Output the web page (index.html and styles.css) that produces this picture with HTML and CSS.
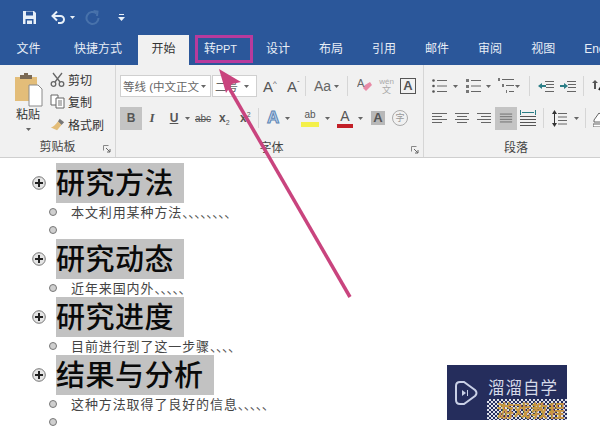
FILE: index.html
```html
<!DOCTYPE html>
<html lang="zh-CN">
<head>
    <meta charset="UTF-8">
    <meta name="viewport" content="width=device-width, initial-scale=1.0">
    <title>大纲视图</title>
    <link rel="stylesheet" href="styles.css">
</head>
<body>
    <svg class="defs" width="0" height="0">
        <symbol id="caret" viewBox="0 0 7 4"><path d="M0 0h7L3.500 4z" fill="#666"/></symbol>
        <symbol id="plus" viewBox="0 0 14 14"><circle cx="7" cy="7" r="6.300" fill="#e4e4e4" stroke="#777" stroke-width="1"/><path d="M3 7h8M7 3v8" stroke="#222" stroke-width="2"/></symbol>
        <symbol id="lines" viewBox="0 0 16 12"><path d="M1 1.500h14M1 4.500h14M1 7.500h14M1 10.500h14" stroke="#666" stroke-width="1" fill="none"/></symbol>
    </svg>

    <!-- 标题栏 -->
    <header class="titlebar">
        <svg class="qa-save" width="15" height="15" viewBox="0 0 15 15"><path d="M1 1h11l2 2v11H1z" fill="#e8f0f8"/><path d="M4 1.500h7v4H4z" fill="#2b579a"/><path d="M3.500 9h8v5h-8z" fill="#2b579a"/><path d="M5 10.500h5v3.500H5z" fill="#e8f0f8"/></svg>
        <svg class="qa-undo" width="15" height="13" viewBox="0 0 15 13"><path d="M2 5h7.500a3.500 3.500 0 0 1 0 7H7" fill="none" stroke="#e8f0f8" stroke-width="2"/><path d="M6 .5L1.500 5 6 9.500" fill="none" stroke="#e8f0f8" stroke-width="2"/></svg>
        <svg class="qa-caret" width="5" height="3" viewBox="0 0 7 4"><path d="M0 0h7L3.500 4z" fill="#e8f0f8"/></svg>
        <svg class="qa-redo" width="15" height="15" viewBox="0 0 15 15"><path d="M11.500 3.500A6 6 0 1 0 13.500 8" fill="none" stroke="#4872ab" stroke-width="2"/><path d="M8.500 1l4 .5-.5 4.500" fill="none" stroke="#4872ab" stroke-width="2"/></svg>
        <svg class="qa-more" width="7" height="7" viewBox="0 0 7 7"><path d="M1 .5h5" stroke="#e8f0f8"/><path d="M0 3h7L3.500 7z" fill="#e8f0f8"/></svg>
    </header>

    <!-- 选项卡 -->
    <nav class="tabs">
        <span class="tab tab-first">文件</span>
        <span class="tab">快捷方式</span>
        <span class="tab tab-active">开始</span>
        <span class="tab tab-marked"><em>转</em>PPT</span>
        <span class="tab">设计</span>
        <span class="tab">布局</span>
        <span class="tab">引用</span>
        <span class="tab">邮件</span>
        <span class="tab">审阅</span>
        <span class="tab">视图</span>
        <span class="tab">Ene</span>
    </nav>

    <!-- 功能区 -->
    <section class="ribbon">
        <div class="group group-clip">
            <div class="group-body clip-body">
                <div class="paste">
                    <svg width="29" height="34" viewBox="0 0 29 34"><path d="M1 4h22v24H1z" fill="#e3bd79"/><path d="M6 2h12v4H6z" fill="#7b6a55"/><path d="M10 0h4v3h-4z" fill="#7b6a55"/><path d="M15 12h9l4 4v17H15z" fill="#fff" stroke="#8a8a8a"/></svg>
                    <span class="paste-label">粘贴</span>
                    <svg width="5" height="3"><use href="#caret"/></svg>
                </div>
                <div class="clip-list">
                    <div class="clip-item">
                        <svg width="15" height="15" viewBox="0 0 15 15"><path d="M3 1l7 9M12 1L5 10" stroke="#666" stroke-width="1.300"/><circle cx="3.500" cy="12" r="2.300" fill="none" stroke="#666" stroke-width="1.300"/><circle cx="11.500" cy="12" r="2.300" fill="none" stroke="#666" stroke-width="1.300"/></svg>
                        <span>剪切</span>
                    </div>
                    <div class="clip-item">
                        <svg width="15" height="15" viewBox="0 0 15 15"><path d="M1 1h7v10H1z" fill="#fff" stroke="#666"/><path d="M6 4h8v10H6z" fill="#fff" stroke="#666"/><path d="M8 7h4M8 9h4M8 11h4" stroke="#777"/></svg>
                        <span>复制</span>
                    </div>
                    <div class="clip-item">
                        <svg width="17" height="15" viewBox="0 0 17 15"><path d="M11 1l5 4-3 3-4-4z" fill="#777"/><path d="M9 4l4 4-5 6-7-3c3-1 5-3 8-7z" fill="#e3bd79"/></svg>
                        <span>格式刷</span>
                    </div>
                </div>
            </div>
            <div class="group-label">剪贴板<svg class="launcher" width="8" height="8" viewBox="0 0 8 8"><path d="M.5.5h5M.5.500v5" stroke="#888" fill="none"/><path d="M3 3l4 4M7 4v3H4" stroke="#666" fill="none"/></svg></div>
        </div>

        <div class="group group-font">
            <div class="group-body">
                <div class="row font-row1">
                    <div class="select select-font"><span>等线 (中文正文</span><svg width="5" height="3"><use href="#caret"/></svg></div>
                    <div class="select select-size"><span>二号</span><svg width="5" height="3"><use href="#caret"/></svg></div>
                    <span class="grow-a">A<sup>^</sup></span>
                    <span class="grow-a shrink-a">A<sup>ˇ</sup></span>
                    <i class="sep sep-grow"></i>
                    <span class="case">Aa</span><svg width="5" height="3"><use href="#caret"/></svg>
                    <i class="sep sep-case"></i>
                    <svg class="ic-clear" width="15" height="16" viewBox="0 0 15 16"><path d="M8 7l5-3 2 3-6 6-3-3z" fill="#e88aa6"/><text x="0" y="9" class="ic-text">A</text></svg>
                    <span class="wen"><small>wén</small>文</span>
                    <span class="boxed-a">A</span>
                </div>
                <div class="row font-row2">
                    <span class="fmt fmt-bold">B</span>
                    <span class="fmt fmt-italic">I</span>
                    <span class="fmt fmt-under">U</span>
                    <svg class="caret-u" width="5" height="3"><use href="#caret"/></svg>
                    <span class="fmt-strike">abc</span>
                    <span class="fmt-script">x<sub>2</sub></span>
                    <span class="fmt-script">x<sup>2</sup></span>
                    <i class="sep sep-fx"></i>
                    <span class="fx-a">A</span><svg class="caret-fx" width="5" height="3"><use href="#caret"/></svg>
                    <span class="hl">ab</span><svg class="caret-hl" width="5" height="3"><use href="#caret"/></svg>
                    <span class="color-a">A</span><svg class="caret-color" width="5" height="3"><use href="#caret"/></svg>
                    <span class="shade-a">A</span>
                    <span class="circle-zi">字</span>
                </div>
            </div>
            <div class="group-label">字体<svg class="launcher" width="8" height="8" viewBox="0 0 8 8"><path d="M.5.5h5M.5.500v5" stroke="#888" fill="none"/><path d="M3 3l4 4M7 4v3H4" stroke="#666" fill="none"/></svg></div>
        </div>

        <div class="group group-para">
            <div class="group-body">
                <div class="row para-row1">
                    <svg width="16" height="16" viewBox="0 0 16 16"><path d="M5 2.500h10M5 8h10M5 13.500h10" stroke="#666"/><circle cx="1.500" cy="2.500" r="1.300" fill="#555"/><circle cx="1.500" cy="8" r="1.300" fill="#555"/><circle cx="1.500" cy="13.500" r="1.300" fill="#555"/></svg>
                    <svg class="caret-p" width="5" height="3"><use href="#caret"/></svg>
                    <svg width="16" height="16" viewBox="0 0 16 16"><path d="M6 2.500h10M6 8h10M6 13.500h10" stroke="#666"/><path d="M1 1h3v3H1zM1 7h3v3H1zM1 12h3v3H1z" fill="#777"/></svg>
                    <svg class="caret-p" width="5" height="3"><use href="#caret"/></svg>
                    <svg width="16" height="16" viewBox="0 0 16 16"><path d="M4 1.500h12M8 7.500h8M11 13.500h5" stroke="#666"/><path d="M0 0h2v3H0zM4 6h2v3H4zM8 12h1v3H8z" fill="#777"/></svg>
                    <svg class="caret-p caret-multi" width="5" height="3"><use href="#caret"/></svg>
                    <i class="sep sep-indent"></i>
                    <svg width="16" height="13" viewBox="0 0 16 13"><path d="M7 1.500h9M8 4.500h8M8 7.500h8M7 11.500h9" stroke="#666"/><path d="M0 6l4-3v2h4v2H4v2z" fill="#2b7d86"/></svg>
                    <svg class="ic-indent" width="16" height="13" viewBox="0 0 16 13"><path d="M7 1.500h9M8 4.500h8M8 7.500h8M7 11.500h9" stroke="#666"/><path d="M8 6L4 3v2H0v2h4v2z" fill="#2b7d86"/></svg>
                    <i class="sep sep-sort"></i>
                    <svg width="14" height="16" viewBox="0 0 14 16"><path d="M4 2l-3 3h2v6h2V5h2z" fill="#555"/><path d="M8 12l6-9" stroke="#222" stroke-width="2"/></svg>
                </div>
                <div class="row para-row2">
                    <svg width="15" height="12" viewBox="0 0 15 12"><path d="M0 1.500h15M0 4.500h10M0 7.500h15M0 10.500h10" stroke="#666"/></svg>
                    <svg class="ic-align" width="14" height="12" viewBox="0 0 14 12"><path d="M0 1.500h14M2 4.500h10M0 7.500h14M2 10.500h10" stroke="#666"/></svg>
                    <svg class="ic-align" width="14" height="12" viewBox="0 0 14 12"><path d="M0 1.500h14M4 4.500h10M0 7.500h14M4 10.500h10" stroke="#666"/></svg>
                    <span class="justify"><svg width="14" height="12"><use href="#lines"/></svg></span>
                    <svg class="ic-dist" width="16" height="17" viewBox="0 0 16 17"><path d="M.5 0v5M15.500 0v5M2 2.500h12" stroke="#2b7d86"/><path d="M0 6.500h16M0 9.500h16M0 12.500h16M0 15.500h16" stroke="#555"/></svg>
                    <i class="sep sep-spacing"></i>
                    <svg width="15" height="17" viewBox="0 0 15 17"><path d="M6 3.500h9M6 7h9M6 10.500h9M6 14h9" stroke="#666"/><path d="M2.500 2v13" stroke="#333"/><path d="M0 4l2.500-4L5 4zM0 13l2.500 4L5 13z" fill="#333"/></svg>
                    <svg class="caret-spacing" width="5" height="3"><use href="#caret"/></svg>
                    <i class="sep sep-shade"></i>
                    <svg width="14" height="17" viewBox="0 0 14 17"><path d="M1 10l5-7 6 5-2 4H1z" fill="#fff" stroke="#666"/><path d="M0 14h14v3H0z" fill="#fff" stroke="#666"/></svg>
                </div>
            </div>
            <div class="group-label">段落</div>
        </div>
    </section>

    <!-- 大纲内容 -->
    <main class="outline">
        <div class="head"><svg width="14" height="14"><use href="#plus"/></svg><h2>研究方法</h2></div>
        <div class="sub"><i class="dot"></i><span>本文利用某种方法<b>、、、、、、、、</b></span></div>
        <div class="sub"><i class="dot"></i></div>
        <div class="head"><svg width="14" height="14"><use href="#plus"/></svg><h2>研究动态</h2></div>
        <div class="sub"><i class="dot"></i><span>近年来国内外<b>、、、、、</b></span></div>
        <div class="head"><svg width="14" height="14"><use href="#plus"/></svg><h2>研究进度</h2></div>
        <div class="sub"><i class="dot"></i><span>目前进行到了这一步骤<b>、、、、</b></span></div>
        <div class="head"><svg width="14" height="14"><use href="#plus"/></svg><h2>结果与分析</h2></div>
        <div class="sub"><i class="dot"></i><span>这种方法取得了良好的信息<b>、、、、、</b></span></div>
        <div class="sub"><i class="dot"></i></div>
    </main>

    <!-- 覆盖在截图上的箭头 -->
    <svg class="arrow" width="600" height="431" viewBox="0 0 600 431">
        <path d="M350 297L228 86" stroke="#c9447e" stroke-width="3.500" fill="none"/>
        <path d="M219 69L241 82 232 84 226 93z" fill="#c9447e"/>
    </svg>

    <!-- 水印 -->
    <aside class="logo">
        <svg class="logo-play" width="24" height="26" viewBox="0 0 24 26"><path d="M6 2h4l11 8q3 3 0 6L10 24H6q-4 0-4-4V6q0-4 4-4z" fill="none" stroke="#c9d0e6" stroke-width="2"/><path d="M8 10l4 3-4 3z" fill="#c9d0e6"/><path d="M13.500 10v6" stroke="#c9d0e6"/></svg>
        <span class="logo-name">溜溜自学</span>
        <span class="logo-tag">游戏教程</span>
    </aside>
</body>
</html>
```

FILE: styles.css
```css
* {
    box-sizing: border-box;
}
body {
    margin: 0;
    width: 600px;
    height: 431px;
    overflow: hidden;
    position: relative;
    background-color: #fff;
    font-family: "Liberation Sans", "Noto Sans CJK SC", sans-serif;
    color: #333;
}
svg {
    display: block;
    flex: none;
}
.defs {
    position: absolute;
}

/* title bar */
.titlebar {
    height: 35px;
    background-color: #2b579a;
    display: flex;
    align-items: center;
    padding: 0 0 0 22px;
}
.qa-undo {
    margin-left: 14px;
}
.qa-caret {
    margin-left: 4px;
}
.qa-redo {
    margin-left: 10px;
}
.qa-more {
    margin-left: 18px;
}

/* tabs */
.tabs {
    height: 30px;
    background-color: #2b579a;
    display: flex;
    padding-left: 2px;
    overflow: hidden;
    font-size: 12px;
    color: #e8eef6;
}
.tab {
    padding: 0 14.5px;
    line-height: 28px;
    white-space: nowrap;
    flex: none;
}
.tab-first {
    padding-right: 19px;
}
.tab-active {
    background-color: #f1f1f1;
    color: #333;
    height: 30px;
    padding: 0 13.5px;
    margin: 0 1.5px;
}
.tab-marked {
    width: 58px;
    height: 28px;
    margin-left: 4.5px;
    padding: 0 0 0 6px;
    border: 3px solid #b83a9c;
    line-height: 22px;
    font-size: 11px;
    letter-spacing: -0.2px;
}
.tab-marked em {
    font-style: normal;
    font-size: 12px;
}
.tab-marked + .tab {
    padding-left: 13px;
}

/* ribbon */
.ribbon {
    height: 93px;
    background-color: #f1f1f1;
    border-bottom: 1px solid #cfcfcf;
    display: flex;
}
.group {
    position: relative;
    border-right: 1px solid #d6d6d6;
    padding-top: 9px;
}
.group-clip {
    width: 116px;
}
.group-font {
    width: 308px;
    padding-left: 4px;
}
.group-para {
    width: 176px;
    border-right: 0;
    padding-left: 8px;
}
.group-body {
    height: 65px;
}
.group-label {
    position: relative;
    text-align: center;
    font-size: 12px;
    line-height: 18px;
    color: #444;
}
.launcher {
    position: absolute;
    right: 4px;
    top: 7px;
}

.clip-body {
    display: flex;
    margin-top: -1px;
}
.paste {
    width: 46px;
    padding-left: 10px;
    display: flex;
    flex-direction: column;
    align-items: center;
}
.paste-label {
    font-size: 12px;
    line-height: 16px;
    margin: 0 0 5px;
    white-space: nowrap;
}
.clip-list {
    margin-top: -5px;
    padding-left: 4px;
}
.clip-item {
    display: flex;
    align-items: center;
    height: 22.5px;
    font-size: 12px;
    gap: 3px;
}
.clip-item svg {
    width: 15px;
}

.row {
    display: flex;
    align-items: center;
}
.row > * {
    flex: none;
}
.font-row1,
.para-row1 {
    height: 24px;
    margin-bottom: 8px;
}
.font-row2,
.para-row2 {
    height: 24px;
}
.sep {
    display: block;
    width: 1px;
    height: 20px;
    background-color: #d6d6d6;
}
.select {
    height: 22px;
    background-color: #fff;
    border: 1px solid #d0d0d0;
    display: flex;
    align-items: center;
    justify-content: space-between;
    padding: 0 4px 0 2px;
    font-size: 11.5px;
    color: #666;
    overflow: hidden;
}
.select span {
    white-space: nowrap;
    overflow: hidden;
}
.select-font {
    width: 91px;
}
.select-size {
    width: 45px;
    margin-left: 1px;
    padding-right: 7px;
}
.grow-a {
    font-size: 15px;
    color: #555;
    margin-left: 6px;
    width: 17px;
}
.grow-a sup {
    font-size: 8px;
    line-height: 0;
}
.shrink-a {
    margin-left: 7px;
    width: 12px;
}
.sep-grow {
    margin: 0 8px 0 6px;
}
.case {
    font-size: 14px;
    color: #666;
    width: 20px;
}
.sep-case {
    margin: 0 9px 0 8px;
}
.ic-text {
    font: 11px "Liberation Sans", sans-serif;
    fill: #666;
}
.wen {
    margin-left: 7px;
    width: 15px;
    font-size: 9px;
    line-height: 8px;
    color: #aaa;
    text-align: center;
    white-space: nowrap;
}
.wen small {
    display: block;
    font-size: 8px;
}
.boxed-a {
    margin-left: 6px;
    width: 16px;
    height: 16px;
    border: 1px solid #555;
    font-size: 13px;
    font-weight: bold;
    line-height: 14px;
    text-align: center;
    color: #555;
}

.fmt {
    font-size: 12px;
    color: #555;
    font-weight: bold;
    text-align: center;
}
.fmt-bold {
    width: 22px;
    height: 23px;
    line-height: 23px;
    background-color: #c4c4c4;
}
.fmt-italic {
    width: 12px;
    margin-left: 4px;
    font-style: italic;
    font-family: "Liberation Serif", serif;
    font-size: 13px;
}
.fmt-under {
    width: 12px;
    margin-left: 10px;
    text-decoration: underline;
}
.caret-u {
    margin: 0 0 0 5px;
}
.fmt-strike {
    margin-left: 5px;
    width: 19px;
    font-size: 10px;
    color: #555;
    text-decoration: line-through;
}
.fmt-script {
    margin-left: 5px;
    width: 16px;
    font-size: 12px;
    font-weight: bold;
    color: #555;
    white-space: nowrap;
}
.fmt-script sub,
.fmt-script sup {
    font-size: 7px;
    font-weight: normal;
    line-height: 0;
}
.sep-fx {
    margin: 0 8px 0 2px;
}
.fx-a {
    width: 14px;
    font-size: 17px;
    font-weight: bold;
    color: #bcd4ee;
    -webkit-text-stroke: 1px #5d86b5;
}
.caret-fx {
    margin: 0 11px 0 4px;
}
.hl {
    width: 18px;
    height: 18px;
    font-size: 10px;
    line-height: 11px;
    color: #555;
    border-bottom: 5px solid #f4f04a;
    text-align: center;
}
.caret-hl {
    margin: 0 7px 0 6px;
}
.color-a {
    width: 16px;
    height: 19px;
    font-size: 14px;
    line-height: 14px;
    text-align: center;
    color: #555;
    border-bottom: 4px solid #c21f27;
}
.caret-color {
    margin: 0 8px 0 5px;
}
.shade-a {
    width: 14px;
    height: 14px;
    background-color: #b8b8b8;
    font-size: 13px;
    font-weight: bold;
    line-height: 14px;
    text-align: center;
    color: #555;
}
.circle-zi {
    width: 16px;
    height: 16px;
    margin-left: 7px;
    border: 1px solid #aaa;
    border-radius: 50%;
    font-size: 9px;
    line-height: 14px;
    text-align: center;
    color: #999;
}

.caret-p {
    margin: 0 7px 0 5px;
}
.caret-multi {
    margin: 0 9px 0 1px;
}
.sep-indent {
    margin-right: 8px;
}
.ic-indent {
    margin-left: 6px;
}
.sep-sort {
    margin: 0 7px;
}
.ic-align {
    margin-left: 8px;
}
.justify {
    width: 22px;
    height: 23px;
    margin-left: 4px;
    background-color: #c4c4c4;
    display: flex;
    align-items: center;
    justify-content: center;
}
.ic-dist {
    margin-left: 3px;
}
.sep-spacing {
    margin: 0 8px 0 7px;
}
.caret-spacing {
    margin-left: 7px;
}
.sep-shade {
    margin: 0 7px 0 6px;
}

/* outline body */
.outline {
    padding: 5px 0 0 32px;
}
.head {
    height: 40px;
    display: flex;
    align-items: center;
    gap: 10px;
}
.head h2 {
    margin: 0;
    height: 40px;
    padding-right: 10px;
    background-color: #c2c2c2;
    font-family: "Noto Sans CJK SC", sans-serif;
    font-size: 29px;
    font-weight: 500;
    letter-spacing: 0.5px;
    line-height: 37px;
    color: #0a0a0a;
}
.sub {
    height: 18px;
    display: flex;
    align-items: center;
    padding-left: 17px;
    font-family: "Noto Sans CJK SC", sans-serif;
    font-size: 13px;
    line-height: 16px;
    letter-spacing: 0.9px;
    color: #444;
}
.dot {
    width: 8px;
    height: 8px;
    border-radius: 50%;
    background-color: #cfcfcf;
    border: 1px solid #777;
    margin-right: 14px;
    flex: none;
}
.sub b {
    font-weight: normal;
    text-spacing-trim: space-all;
    letter-spacing: -7px;
    color: #555;
}

/* overlays */
.arrow {
    position: absolute;
    left: 0;
    top: 0;
    pointer-events: none;
}
.logo {
    position: absolute;
    left: 447px;
    top: 365px;
    width: 120px;
    height: 55px;
    background-color: #252d5c;
}
.logo-play {
    position: absolute;
    left: 7px;
    top: 15px;
}
.logo-name {
    position: absolute;
    left: 41px;
    top: 10px;
    font-family: "Noto Sans CJK SC", sans-serif;
    font-size: 16.5px;
    letter-spacing: 1px;
    line-height: 24px;
    white-space: nowrap;
    color: #d5d9e8;
}
.logo-tag {
    position: absolute;
    left: 40px;
    top: 34px;
    width: 80px;
    height: 21px;
    padding-left: 10px;
    font-family: "Noto Sans CJK SC", sans-serif;
    font-size: 17px;
    font-weight: bold;
    line-height: 21px;
    white-space: nowrap;
    color: #c7963f;
    background-color: #8d90a8;
    background-image: repeating-conic-gradient(#dfe1ea 0 25%, #252d5c 0 50%);
    background-size: 4px 4px;
}
```
